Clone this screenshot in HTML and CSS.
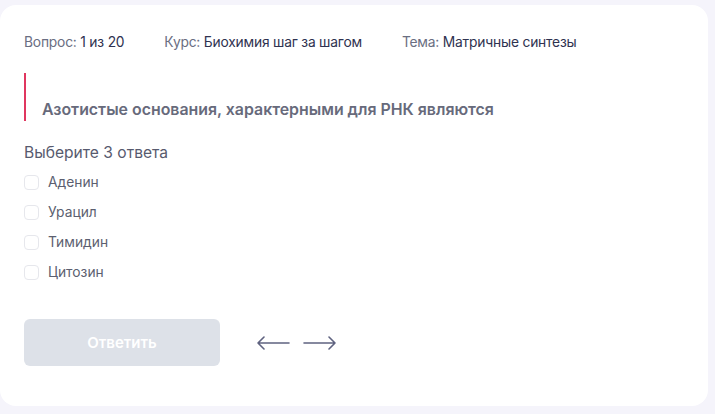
FILE: index.html
```html
<!DOCTYPE html>
<html lang="ru">
<head>
<meta charset="utf-8">
<link rel="stylesheet" href="styles.css">
</head>
<body>
<div class="card">
  <div class="meta">
    <span class="meta-item"><span class="lbl">Вопрос:</span> <span class="val">1 из 20</span></span>
    <span class="meta-item"><span class="lbl">Курс:</span> <span class="val">Биохимия шаг за шагом</span></span>
    <span class="meta-item"><span class="lbl">Тема:</span> <span class="val">Матричные синтезы</span></span>
  </div>
  <div class="question">Азотистые основания, характерными для РНК являются</div>
  <div class="hint">Выберите 3 ответа</div>
  <ul class="options">
    <li class="option"><span class="box"></span>Аденин</li>
    <li class="option"><span class="box"></span>Урацил</li>
    <li class="option"><span class="box"></span>Тимидин</li>
    <li class="option"><span class="box"></span>Цитозин</li>
  </ul>
  <div class="actions">
    <button class="submit">Ответить</button>
    <svg class="arrow" width="34" height="14" viewBox="0 0 34 14"><path d="M33 7H2M8 1L2 7l6 6" fill="none" stroke="#5f6380" stroke-width="1.6" stroke-linecap="round" stroke-linejoin="round"/></svg>
    <svg class="arrow" width="34" height="14" viewBox="0 0 34 14"><path d="M1 7h31M26 1l6 6-6 6" fill="none" stroke="#5f6380" stroke-width="1.6" stroke-linecap="round" stroke-linejoin="round"/></svg>
  </div>
</div>
</body>
</html>
```
FILE: styles.css
```css
html, body { margin: 0; padding: 0; }
body {
  background: #f5f4fb;
  font-family: Inter, "Noto Sans", sans-serif;
  width: 715px;
  height: 414px;
  overflow: hidden;
  padding: 5px 7px 0 0;
  box-sizing: border-box;
}
.card {
  background: #fff;
  border-radius: 16px;
  height: 401px;
  padding: 28px 24px 0 24px;
  box-sizing: border-box;
}
.meta {
  display: flex;
  gap: 40px;
  font-size: 13.8px;
  line-height: 18px;
  letter-spacing: -0.2px;
}
.lbl { color: #6a6e82; }
.val { color: #2f3250; }
.question {
  margin-top: 22px;
  border-left: 2px solid #e0365f;
  padding: 26px 0 0 16px;
  font-size: 15.9px;
  font-weight: 600;
  color: #676a7b;
  line-height: 22px;
}
.hint {
  margin-top: 22px;
  font-size: 15.6px;
  color: #575a6e;
  line-height: 20px;
}
.options {
  list-style: none;
  margin: 4px 0 0;
  padding: 0;
}
.option {
  display: flex;
  align-items: center;
  height: 30px;
  font-size: 13.8px;
  color: #5c5f70;
}
.box {
  width: 15px;
  height: 15px;
  border: 1px solid #e6e7ec;
  border-radius: 4px;
  margin-right: 9px;
  box-sizing: border-box;
}
.actions {
  display: flex;
  align-items: center;
  margin-top: 32px;
}
.submit {
  width: 196px;
  height: 47px;
  border: 0;
  border-radius: 6px;
  background: #dde1e8;
  color: #fff;
  font-family: inherit;
  font-size: 15px;
  font-weight: 600;
  margin-right: 36px;
}
.arrow { display: block; margin-right: 13px; }
```
